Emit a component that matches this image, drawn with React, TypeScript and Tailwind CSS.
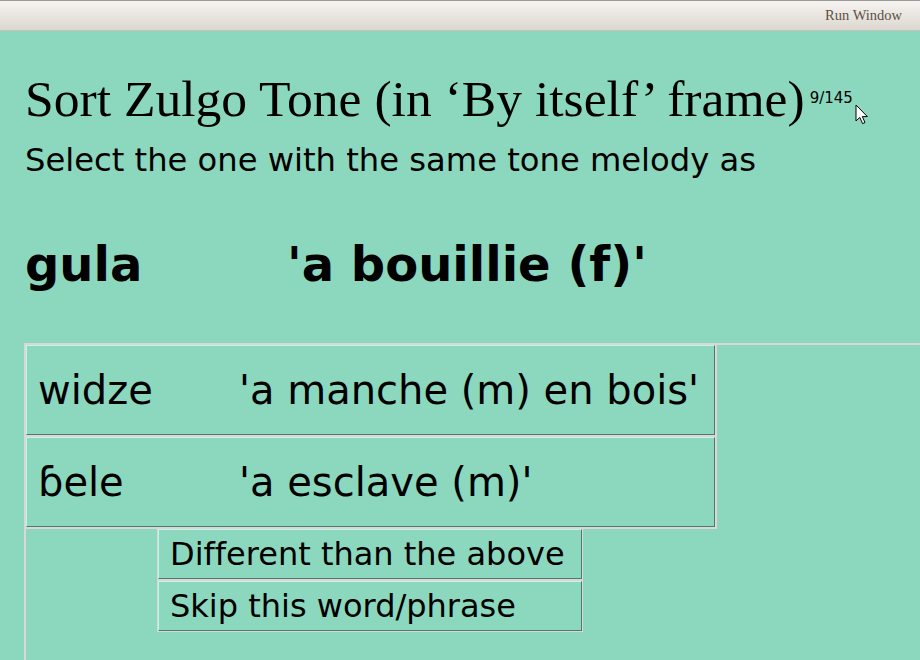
const rows = [
  { word: 'widze', gloss: "'a manche (m) en bois'" },
  { word: 'ɓele', gloss: "'a esclave (m)'" },
];

const actions = ['Different than the above', 'Skip this word/phrase'];

function Cursor() {
  return (
    <svg className="absolute left-[855px] top-[104px]" width="14" height="22" viewBox="0 0 14 22">
      <path d="M1 1 L1 17 L4.8 13.4 L7.6 19.6 L10 18.6 L7.3 12.6 L12.4 12.6 Z" fill="#fff" stroke="#000" strokeWidth="1" strokeLinejoin="round" />
    </svg>
  );
}

export default function App() {
  return (
    <div className="relative w-[920px] h-[660px] overflow-hidden bg-[#8bd8bf] flex flex-col text-black font-['DejaVu_Sans',sans-serif] [font-variant-ligatures:none]">
      <div className="h-[31px] shrink-0 border-t border-[#9c9792] border-b border-b-[#c6c1b9] bg-gradient-to-b from-[#f6f4f1] to-[#dcd7d0] flex items-center justify-end pr-[18px]">
        <span className="font-['Liberation_Serif',serif] text-[14.5px] text-[#5c4f45]">Run Window</span>
      </div>

      <div className="pl-[25px] pt-[39px]">
        <div className="flex items-start">
          <h1 className="font-['Liberation_Serif',serif] text-[51.6px] leading-[58px] whitespace-nowrap">
            Sort Zulgo Tone (in ‘By itself’ frame)
          </h1>
          <span className="ml-[5px] mt-[19px] text-[15px] leading-[18px]">9/145</span>
        </div>
        <p className="mt-[13px] text-[32.2px] leading-[38px] whitespace-nowrap">
          Select the one with the same tone melody as
        </p>
        <div className="mt-[58px] flex font-bold text-[48px] leading-[54px] whitespace-nowrap">
          <span className="w-[262px]">gula</span>
          <span>'a bouillie (f)'</span>
        </div>
      </div>

      <div className="mt-[52px] ml-[24px] flex-1 border-t-2 border-l-2 border-[#dcd6d6]">
        <div className="w-fit flex flex-col gap-[2px] bg-[#dcd6d6] pr-[2px] pb-[2px]">
          {rows.map((r) => (
            <div
              key={r.word}
              className="w-[689px] h-[90px] flex items-center pl-[11px] bg-[#8bd8bf] border border-t-[#c2f5e6] border-l-[#c2f5e6] border-b-[#4c7a6b] border-r-[#4c7a6b] text-[40px] leading-[47px] whitespace-nowrap"
            >
              <span className="w-[201px]">{r.word}</span>
              <span>{r.gloss}</span>
            </div>
          ))}
        </div>
        <div className="ml-[131px] w-fit flex flex-col gap-[2px] bg-[#dcd6d6] px-[1px] pb-[1px]">
          {actions.map((a) => (
            <button
              key={a}
              className="w-[424px] h-[50px] flex items-center pl-[11px] bg-[#8bd8bf] border border-t-[#c2f5e6] border-l-[#c2f5e6] border-b-[#4c7a6b] border-r-[#4c7a6b] text-[32px] leading-[38px] whitespace-nowrap text-left"
            >
              {a}
            </button>
          ))}
        </div>
      </div>

      <Cursor />
    </div>
  );
}
